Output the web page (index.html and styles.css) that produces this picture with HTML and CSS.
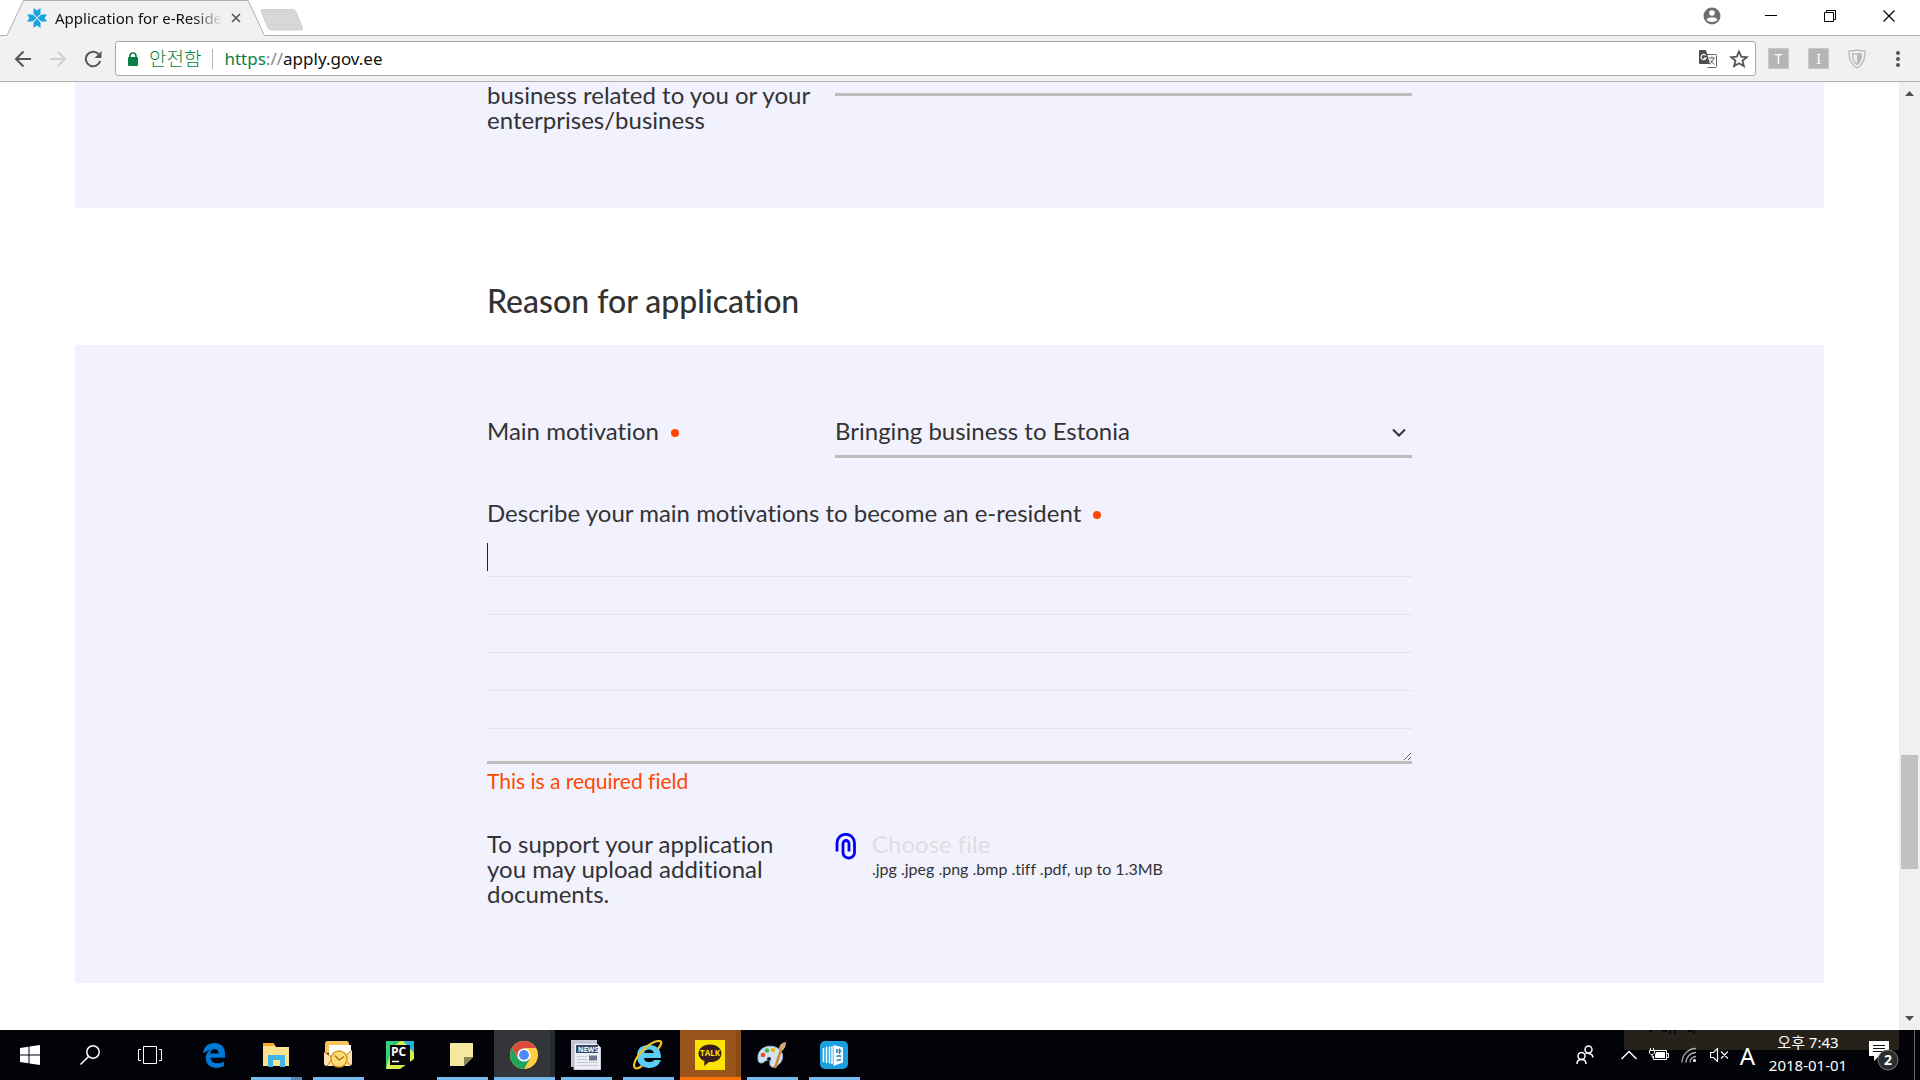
FILE: index.html
```html
<!DOCTYPE html>
<html lang="en">
<head>
<meta charset="utf-8">
<title>Application for e-Residency</title>
<link rel="stylesheet" href="styles.css">
</head>
<body>
<header class="browser">
  <div class="tabstrip">
    <div class="tab">
      <svg class="tab-shape" width="265" height="36" viewBox="0 0 265 36" aria-hidden="true"><path d="M0 36V35.500H7L23.500.500H248L264.500 35.500V36Z" fill="#f1f1f1"/><path d="M0 35.500H7L23.500.500H248L264.500 35.500" fill="none" stroke="#b0b0b0"/></svg>
      <svg class="favicon" width="20" height="20" viewBox="0 0 20 20" aria-hidden="true"><g fill="#16a3e0"><path id="petal" d="M6.500 0L10 2.500 13.500 0V5.500L10 9.600 6.500 5.500Z"/><use href="#petal" transform="rotate(90 10 10)"/><use href="#petal" transform="rotate(180 10 10)"/><use href="#petal" transform="rotate(270 10 10)"/></g></svg>
      <span class="tab-title">Application for e-Reside</span>
      <button class="icon-btn tab-close" aria-label="Close tab"><svg width="10" height="10" viewBox="0 0 10 10"><path d="M1 1L9 9M9 1L1 9" stroke="#555" stroke-width="1.600"/></svg></button>
    </div>
    <button class="icon-btn new-tab" aria-label="New tab"><svg width="44" height="22" viewBox="0 0 44 22"><path d="M2 .500H33Q35 .500 36 3L42.500 19Q43 21 41 21H11Q9 21 8 19L1 2Q.500.500 2 .500Z" fill="#d7d7d7" stroke="#d0d0d0"/></svg></button>
    <div class="window-controls">
      <button class="icon-btn" aria-label="Profile"><svg width="18" height="18" viewBox="0 0 18 18"><circle cx="9" cy="9" r="8.500" fill="#6e6e6e"/><circle cx="9" cy="6" r="2.800" fill="#fff"/><path d="M3.500 13Q4.500 10.200 9 10.200T14.500 13Q12.500 15 9 15T3.500 13Z" fill="#fff"/></svg></button>
      <button class="icon-btn" aria-label="Minimize"><svg width="12" height="12" viewBox="0 0 12 12"><path d="M0 5.500H12" stroke="#000"/></svg></button>
      <button class="icon-btn" aria-label="Restore"><svg width="12" height="12" viewBox="0 0 12 12" fill="none" stroke="#000"><path d="M.500 2.500H9.500V11.500H.500ZM2.500 2.500V.500H11.500V9.500H9.500"/></svg></button>
      <button class="icon-btn" aria-label="Close"><svg width="12" height="12" viewBox="0 0 12 12"><path d="M.500.500L11.500 11.500M11.500.500L.500 11.500" stroke="#000" stroke-width="1.200"/></svg></button>
    </div>
  </div>
  <div class="toolbar">
    <button class="icon-btn" aria-label="Back"><svg width="18" height="18" viewBox="0 0 18 18" fill="none" stroke="#555" stroke-width="2"><path d="M17 9H2.500M9.500 1.500L2 9 9.500 16.500"/></svg></button>
    <button class="icon-btn" aria-label="Forward"><svg width="18" height="18" viewBox="0 0 18 18" fill="none" stroke="#d0d0d0" stroke-width="2"><path d="M1 9H15.500M8.500 1.500L16 9 8.500 16.500"/></svg></button>
    <button class="icon-btn" aria-label="Reload"><svg width="18" height="18" viewBox="0 0 18 18"><path d="M14.500 4A7.300 7.300 0 1 0 16.200 11" fill="none" stroke="#555" stroke-width="2"/><path d="M17.500 1V8H10.500Z" fill="#555"/></svg></button>
    <div class="omnibox">
      <svg class="lock" width="10" height="14" viewBox="0 0 10 14" aria-hidden="true"><rect y="5" width="10" height="9" rx="1" fill="#0b8043"/><path d="M2 6V4A3 3 0 0 1 8 4V6" fill="none" stroke="#0b8043" stroke-width="1.600"/></svg>
      <span class="secure">안전함</span>
      <div class="url" role="textbox" aria-label="Address" contenteditable="true" spellcheck="false"><span class="scheme">https</span><span class="sep">://</span>apply.gov.ee</div>
      <button class="icon-btn" aria-label="Translate"><svg width="18" height="18" viewBox="0 0 18 18"><path d="M8 4.500H16.500Q17.500 4.500 17.500 5.500V16.500Q17.500 17.500 16.500 17.500H8.500" fill="#fff" stroke="#666"/><path d="M1 0H7L11 14H1Q0 14 0 13V1Q0 0 1 0Z" fill="#4e4e4e"/><path d="M6.800 5.500A2.600 2.600 0 1 0 7 8.200H4.800" fill="none" stroke="#fff" stroke-width="1.200"/><path d="M10 8H16M13 6.500V8M15 8Q14 12 10.500 14M11.500 10Q13 13 15.500 14.500" fill="none" stroke="#666"/></svg></button>
      <button class="icon-btn" aria-label="Bookmark"><svg width="20" height="20" viewBox="0 0 20 20"><path d="M10 2.500L12.200 7.600 17.800 8.100 13.500 11.700 14.900 17.200 10 14.200 5.100 17.200 6.500 11.700 2.200 8.100 7.800 7.600Z" fill="none" stroke="#555" stroke-width="1.800"/></svg></button>
    </div>
    <div class="extensions">
      <button class="ext-tile">T</button>
      <button class="ext-tile">I</button>
      <button class="icon-btn" aria-label="Shield"><svg width="18" height="20" viewBox="0 0 18 20"><path d="M1 2Q6 2 9 1 12 2 17 2 17.500 14 9 19 .500 14 1 2Z" fill="#f1f1f1" stroke="#bdbdbd" stroke-width="1.400"/><path d="M4.500 5H13.500Q13.500 12 9 15.500 4.500 12 4.500 5Z" fill="none" stroke="#b8b8b8" stroke-width="1.300"/><path d="M9 5H13.500Q13.500 12 9 15.500Z" fill="#b8b8b8"/></svg></button>
      <button class="icon-btn" aria-label="Menu"><svg width="4" height="16" viewBox="0 0 4 16" fill="#555"><circle cx="2" cy="2" r="2"/><circle cx="2" cy="8" r="2"/><circle cx="2" cy="14" r="2"/></svg></button>
    </div>
  </div>
</header>

<div class="viewport">
  <main class="page">
    <section class="panel panel-prev">
      <div class="column row">
        <label for="related">business related to you or your enterprises/business</label>
        <input class="line-input" id="related" type="text">
      </div>
    </section>
    <h2 class="column heading">Reason for application</h2>
    <section class="panel panel-reason">
      <div class="column">
        <div class="row">
          <label class="row-label required" for="motivation">Main motivation</label>
          <div class="select-wrap">
            <select id="motivation"><option>Bringing business to Estonia</option></select>
            <svg class="select-arrow" width="14" height="10" viewBox="0 0 14 10" aria-hidden="true"><path d="M1 1.500L7 7.500 13 1.500" fill="none" stroke="#333" stroke-width="2"/></svg>
          </div>
        </div>
        <label class="describe required" for="describe">Describe your main motivations to become an e-resident</label>
        <textarea id="describe"></textarea>
        <p class="error">This is a required field</p>
        <div class="row">
          <p class="upload-text">To support your application you may upload additional documents.</p>
          <div class="upload">
            <svg class="clip" width="22" height="28" viewBox="0 0 22 28" aria-hidden="true"><path d="M2 18.500V10A8.600 8.600 0 0 1 19.500 10V20A5.800 5.800 0 0 1 8 20V10.500A3 3 0 0 1 14 10.500V18.500" fill="none" stroke="#00f" stroke-width="2.800"/></svg>
            <div>
              <button class="choose">Choose file</button>
              <p class="hint">.jpg .jpeg .png .bmp .tiff .pdf, up to 1.3MB</p>
            </div>
          </div>
        </div>
      </div>
    </section>
  </main>
  <div class="scrollbar" aria-hidden="true">
    <svg width="9" height="5" viewBox="0 0 9 5"><path d="M0 5L4.500 0 9 5Z" fill="#505050"/></svg>
    <div class="track"><div class="thumb"></div></div>
    <svg width="9" height="5" viewBox="0 0 9 5"><path d="M0 0L4.500 5 9 0Z" fill="#505050"/></svg>
  </div>
</div>

<footer class="taskbar">
  <div class="ghost" aria-hidden="true"><svg width="60" height="5" viewBox="0 0 60 5"><path d="M1 1H4M14 1H19M22 0V4M27 0V4M46 0V4M40 1H44" stroke="#0d0b08" stroke-width="2"/></svg></div>
  <nav class="system">
    <button aria-label="Start"><svg width="20" height="20" viewBox="0 0 20 20" fill="#fff"><path d="M0 3L8.500 1.700V9.500H0ZM9.500 1.500L20 0V9.500H9.500ZM0 10.500H8.500V18.300L0 17ZM9.500 10.500H20V20L9.500 18.500Z"/></svg></button>
    <button aria-label="Search"><svg width="20" height="20" viewBox="0 0 20 20" fill="none" stroke="#fff" stroke-width="1.500"><circle cx="13" cy="7" r="6.200"/><path d="M8.500 11.500L.500 19.500"/></svg></button>
    <button aria-label="Task view"><svg width="24" height="18" viewBox="0 0 24 18" fill="none" stroke="#fff"><path d="M5.500.500H18.500V17.500H5.500ZM3 3.500H.500V14.500H3M21 3.500H23.500V14.500H21"/></svg></button>
  </nav>
  <nav class="apps">
    <button aria-label="Edge"><svg width="24" height="26" viewBox="0 0 26 28"><path d="M1 12Q3 1 13 1 25 1 25 14V17H9Q10 23 17 23 21 23 24 21V26Q20 28 15 28 4 27 4 17 4 11 10 8 6 9 1 12ZM9 12.500H18Q18 7.500 13.500 7.500 9.500 8 9 12.500Z" fill="#0078d7"/></svg></button>
    <button class="open stacked" aria-label="File Explorer"><svg width="28" height="24" viewBox="0 0 28 24"><path d="M1 1H12L14 4H27V23H1Z" fill="#ffe28e"/><path d="M1 0H12V3H1Z" fill="#f5ac1c"/><path d="M6 24V12H23V24H18V17H11V24Z" fill="#3fb6e8"/></svg></button>
    <button class="open" aria-label="Outlook"><svg width="30" height="28" viewBox="0 0 30 28"><path d="M2 3Q2 0 5 0H23Q26 0 26 3V12H2Z" fill="#f9c45c"/><path d="M6 4H28V20H6Z" fill="#fff"/><path d="M1 11L15 19 29 9V22Q29 25 26 25H4Q1 25 1 22Z" fill="#fbe0b0"/><path d="M1 11L10 17 4 25M29 9L20 17 27 24" fill="none" stroke="#e4692b"/><circle cx="16" cy="18" r="8" fill="#ffdf7a" stroke="#d99b1a" stroke-width="1.500"/><path d="M12 14.500L16 19 21 15.500" fill="none" stroke="#a97818" stroke-width="1.500"/></svg></button>
    <button aria-label="PyCharm"><svg width="28" height="28" viewBox="0 0 28 28"><path d="M0 0H20L0 20Z" fill="#22c97a"/><path d="M14 0H28V18L14 28H0V12Z" fill="#d9ef4a"/><path d="M17 0H28V12Z" fill="#21b6e0"/><path d="M0 0H8L0 28Z" fill="#35d27a"/><rect x="4" y="4" width="20" height="20" fill="#080808"/><text class="pc-text" x="5" y="15">PC</text><path d="M6 20.500H13" stroke="#fff" stroke-width="1.500"/></svg></button>
    <button class="open" aria-label="Sticky Notes"><svg width="24" height="24" viewBox="0 0 24 24"><path d="M0 0H23V14L14 23H0Z" fill="#f4e8a0"/><path d="M14 23V14H23Z" fill="#8a8358"/></svg></button>
    <button class="open active" aria-label="Chrome"><svg width="28" height="28" viewBox="0 0 28 28"><circle cx="14" cy="14" r="14" fill="#ffcd40"/><path d="M14 14V7H26.100A14 14 0 0 0 1.900 7L8 17.500Z" fill="#dd4c40"/><path d="M1.900 7A14 14 0 0 0 14 28L20 17.500 8 17.500Z" fill="#1da462"/><circle cx="14" cy="14" r="6.600" fill="#fff"/><circle cx="14" cy="14" r="5" fill="#4c8bf5"/></svg></button>
    <button class="open" aria-label="News"><svg width="30" height="30" viewBox="0 0 30 30"><path d="M0 0H26V27H0Z" fill="#c5c7d4"/><path d="M3 3H25L30 8V30H3Z" fill="#eeeef6" stroke="#b4b6c8"/><path d="M5 5H27V13H5Z" fill="#384a66"/><text class="news-text" x="7" y="12">NEWS</text><path d="M18 15.500H26V20.500H18Z" fill="#6d738c"/><path d="M6 16.500H16M6 19.500H16M6 22.500H27M6 25.500H27" stroke="#c5c7d2"/></svg></button>
    <button class="open" aria-label="Internet Explorer"><svg width="30" height="30" viewBox="0 0 30 30"><path d="M28 18H11Q11 22 16 22 20 22 21 20H28Q25 28 16 28 4 27 4 16 4 5 16 5 28 5 28 18ZM11 13H21Q20 9.500 16 9.500 12 9.500 11 13Z" fill="#5bcdf5"/><path d="M25 9Q31 1 26 1 20 1 11 9 1 19 1 26 2 31 9 26" fill="none" stroke="#f4c022" stroke-width="2.200"/></svg></button>
    <button class="open alert" aria-label="KakaoTalk"><svg width="30" height="30" viewBox="0 0 30 30"><rect width="30" height="30" fill="#fbe300"/><path d="M15 4.500C8 4.500 3.500 8.500 3.500 13.500 3.500 17 6 19.500 9.500 21L9 26 14 22C21 22.500 26.500 19 26.500 13.500 26.500 8.500 22 4.500 15 4.500Z" fill="#3a1d1d"/><text class="talk-text" x="15" y="16" text-anchor="middle">TALK</text></svg></button>
    <button class="open" aria-label="Paint"><svg width="30" height="28" viewBox="0 0 30 28"><path d="M1 18C0 8 10 3 18 6 27 9 28 19 21 24 17 28 12 26 13 22 13 18 9 19 7 21 4 23 1 22 1 18Z" fill="#cfe3f3" stroke="#90b5d3"/><circle cx="6" cy="14" r="2.300" fill="#e3502b"/><circle cx="10" cy="9.500" r="2.300" fill="#4cb54a"/><circle cx="16" cy="9" r="2.300" fill="#f3b51c"/><circle cx="12" cy="18" r="2" fill="#10203a"/><path d="M18 27L24 9" stroke="#d9822b" stroke-width="2.400"/><path d="M22 8Q22 2 29 1 29 7 25 10Z" fill="#d5a876"/></svg></button>
    <button class="open" aria-label="Ridibooks"><svg width="28" height="28" viewBox="0 0 28 28"><rect width="28" height="28" rx="5" fill="#1c9fe0"/><path d="M3.500 7V21M6.500 6V22M9.500 5.500V22.500M12 5V23" stroke="#fff" stroke-width="1.500"/><path d="M13.500 4L23 6.500V21.500L13.500 25Z" fill="#fff"/><path d="M17 8V12M19.500 7.500V13M19.500 10H21.500M16.500 15.500Q19 14 21 15.500M16.500 19.500L21 18.500" fill="none" stroke="#1c7fc0" stroke-width="1.600"/></svg></button>
  </nav>
  <div class="tray">
    <button class="people" aria-label="People"><svg width="18" height="20" viewBox="0 0 18 20" fill="none" stroke="#fff" stroke-width="1.500"><circle cx="12.500" cy="4.500" r="3.500"/><circle cx="5.500" cy="11" r="3.500"/><path d="M1 19Q1 14.500 5.500 14.500T10 19M12 8.500Q16.500 8.500 17 12.500M9.500 9L11 8"/></svg></button>
    <button aria-label="Show hidden icons"><svg width="16" height="10" viewBox="0 0 16 10"><path d="M.500 9L8 1.500 15.500 9" fill="none" stroke="#fff" stroke-width="1.500"/></svg></button>
    <button aria-label="Battery"><svg width="20" height="14" viewBox="0 0 20 14"><path d="M6 2.500H17.500V11.500H4.500V8M17.500 5.500H19.500V9.500H17.500" fill="none" stroke="#fff"/><path d="M7 4H16V10H6V7Z" fill="#fff"/><path d="M1.500 0V2M4.500 0V2M.500 2.500H5.500V5L4 6.500H2L.500 5ZM3 6.500V8Q3 10 5 10" fill="none" stroke="#fff"/></svg></button>
    <button aria-label="Network"><svg width="16" height="16" viewBox="0 0 16 16" fill="none" stroke="#aaa" stroke-width="1.300"><path d="M1 15.500A14 14 0 0 1 15 1.500M5 15.500A10 10 0 0 1 15 5.500M9 15.500A6 6 0 0 1 15 9.500"/><circle cx="13.500" cy="13.500" r="1.500" fill="#fff" stroke="none"/></svg></button>
    <button aria-label="Volume muted"><svg width="18" height="14" viewBox="0 0 18 14" fill="none" stroke="#fff" stroke-width="1.200"><path d="M.500 4.500H3.500L7.500.500V13.500L3.500 9.500H.500ZM11 3.500L18 10.500M18 3.500L11 10.500"/></svg></button>
    <button class="ime">A</button>
    <button class="clock"><span>오후 7:43</span><span>2018-01-01</span></button>
    <button class="notify" aria-label="Notifications"><svg width="32" height="32" viewBox="0 0 32 32"><path d="M2 2H22V17H12L7 22V17H2Z" fill="#fff"/><path d="M6 6.500H18M6 9.500H18M6 12.500H18" stroke="#111"/><circle cx="21" cy="21" r="10" fill="#2d2d2d" stroke="#777"/><text class="badge-text" x="21" y="26" text-anchor="middle">2</text></svg></button>
    <button class="show-desktop" aria-label="Show desktop"></button>
  </div>
</footer>
</body>
</html>
```
FILE: styles.css
```css
* { box-sizing: border-box; }

body {
  margin: 0;
  height: 100vh;
  display: flex;
  flex-direction: column;
  overflow: hidden;
  background: #fff;
  color: #333;
  font-family: Lato, "Noto Sans CJK KR", sans-serif;
  font-variant-ligatures: none;
}

h2, p { margin: 0; }

button {
  padding: 0;
  border: 0;
  background: none;
  color: inherit;
  font: inherit;
}

svg { display: block; flex: none; }

.icon-btn { display: flex; align-items: center; justify-content: center; }

/* Browser frame */
.browser { flex: none; font-family: "Noto Sans", "Noto Sans CJK KR", sans-serif; }

.tabstrip {
  display: flex;
  height: 36px;
  background: linear-gradient(#b0b0b0, #b0b0b0) bottom / 100% 1px no-repeat #fff;
}

.tab {
  position: relative;
  display: flex;
  align-items: center;
  width: 260px;
  padding-left: 27px;
}

.tab-shape { position: absolute; left: 0; top: 0; }
.favicon, .tab-title, .tab-close { position: relative; }

.tab-title {
  width: 168px;
  margin: 0 8px;
  overflow: hidden;
  white-space: nowrap;
  font-size: 15px;
  line-height: 22px;
  color: #111;
  -webkit-mask-image: linear-gradient(90deg, #000 82%, transparent);
  mask-image: linear-gradient(90deg, #000 82%, transparent);
}

.new-tab { padding: 9px 0 5px; align-items: flex-start; }

.window-controls { display: flex; margin: 0 2px 0 auto; height: 32px; }
.window-controls button { width: 59px; }

.toolbar {
  display: flex;
  align-items: center;
  height: 46px;
  padding-left: 5px;
  background: #f1f1f1;
  border-bottom: 1px solid #b0b0b0;
}

.toolbar > .icon-btn { width: 35px; height: 35px; }

.omnibox {
  flex: 1;
  display: flex;
  align-items: center;
  height: 35px;
  margin-left: 5px;
  padding: 0 6px 0 12px;
  background: #fff;
  border: 1px solid #a9a9a9;
  border-radius: 3px;
  font-size: 17px;
  line-height: 24px;
}

.omnibox .icon-btn { margin-left: 12px; }

.secure {
  margin: 0 11px;
  padding-right: 11px;
  border-right: 1px solid #b5b5b5;
  line-height: 20px;
  font-size: 19px;
  font-weight: 300;
  color: #0b8043;
}

.url { flex: 1; outline: 0; color: #111; }
.scheme { color: #0b8043; }
.sep { color: #888; }

.extensions { display: flex; align-items: center; gap: 19px; padding: 0 20px 0 12px; }
.extensions .icon-btn:last-child { margin-left: 11px; }

.ext-tile {
  width: 21px;
  height: 21px;
  background: #b5b5b5;
  border: 1px solid #c8c8c8;
  color: #fff;
  font-size: 14px;
  line-height: 19px;
}

/* Page */
.viewport { flex: 1; min-height: 0; display: flex; }
.page {
  flex: 1;
  padding: 0 75px;
  overflow: clip;
  overflow-clip-margin: 4px;
  font-size: 24px;
  line-height: 25px;
}
.column { width: 100%; max-width: 925px; margin: 0 auto; }
.panel { background: #f2f2ff; }
.panel-prev { height: 126px; }
.row { display: grid; grid-template-columns: 348px 1fr; align-items: start; }
.row label, .upload-text { padding-right: 20px; }

.line-input {
  width: 100%;
  height: 14px;
  padding: 0;
  border: 0;
  border-bottom: 3px solid #bcbcbc;
  background: none;
}

.heading {
  padding: 74px 0 25px;
  font-size: 32px;
  line-height: 38px;
  font-weight: 500;
}

.panel-reason { padding: 68px 0 77px; }
.row .row-label { padding-top: 5px; }

.required::after {
  content: "";
  display: inline-block;
  width: 8px;
  height: 8px;
  margin-left: 12px;
  border-radius: 50%;
  background: #ff4800;
  vertical-align: 3px;
}

.select-wrap { position: relative; }

select {
  display: block;
  width: 100%;
  height: 45px;
  padding: 0 0 7px;
  appearance: none;
  border: 0;
  border-bottom: 3px solid #bcbcbc;
  border-radius: 0;
  background: none;
  color: inherit;
  font: inherit;
  line-height: 31px;
}

.select-arrow { position: absolute; right: 6px; top: 15px; }

.describe { display: block; margin: 42px 0 14px; }

/* Ruled writing area with a text cursor on the first line */
textarea {
  display: block;
  width: 100%;
  height: 225px;
  padding: 0;
  border: 0;
  border-bottom: 3px solid #bcbcbc;
  outline: 0;
  background:
    linear-gradient(#222, #222) 0 4px / 1px 28px no-repeat,
    repeating-linear-gradient(transparent 0 37px, #e4e4e4 37px 38px);
  color: inherit;
  font: inherit;
  line-height: 38px;
}

.error { margin: 5px 0 38px; font-size: 21px; line-height: 24px; color: #ff4800; }
.upload { display: flex; gap: 15px; }
.clip { margin-top: 2px; }
.choose { display: block; color: #dedede; }
.hint { font-size: 16px; line-height: 25px; }

.scrollbar {
  flex: none;
  display: flex;
  flex-direction: column;
  align-items: center;
  width: 21px;
  padding: 9px 0;
  background: #f0f0f0;
}

.track { flex: 1; display: flex; flex-direction: column; justify-content: flex-end; padding-bottom: 147px; }
.thumb { width: 17px; height: 114px; background: #c1c1c1; }

/* Taskbar */
.taskbar {
  position: relative;
  flex: none;
  display: flex;
  height: 50px;
  background: #010308;
  color: #fff;
  font-family: "Noto Sans", "Noto Sans CJK KR", sans-serif;
}

.taskbar button {
  position: relative;
  display: flex;
  align-items: center;
  justify-content: center;
}

.ghost { position: absolute; right: 21px; top: 0; width: 275px; height: 20px; padding-left: 24px; background: #26221b; }
.system { display: flex; }
.system button { width: 60px; }
.apps { display: flex; gap: 1px; margin-left: 4px; }
.apps button { width: 61px; padding-right: 2px; }
.apps .open { background: linear-gradient(#76b9ed, #76b9ed) bottom / 51px 3px no-repeat; }
.apps .stacked { background: linear-gradient(90deg, #76b9ed 40px, #5787b0 40px) bottom / 51px 3px no-repeat; }
.apps .active { background: linear-gradient(#76b9ed, #76b9ed) bottom / 100% 3px no-repeat, linear-gradient(90deg, #333539 56px, #25282c 56px); }
.apps .alert { background: linear-gradient(#ff7200, #ff7200) bottom / 100% 3px no-repeat, linear-gradient(90deg, #9a551d 56px, #8a4b19 56px); }

.pc-text { font: 700 12px "Open Sans", sans-serif; fill: #fff; }
.news-text { font: 700 7px "Open Sans", sans-serif; fill: #fff; }
.talk-text { font: 700 8px "Open Sans", sans-serif; fill: #fbe300; }
.badge-text { font: 700 14px "Open Sans", sans-serif; fill: #fff; }

.tray { display: flex; margin-left: auto; }
.tray button { width: 30px; padding-right: 1px; }
.tray .people { margin-right: 14px; }
.tray .ime { padding-right: 3px; font-size: 24px; }
.tray .clock { flex-direction: column; padding: 0 0 2px; width: 88px; font-size: 15px; line-height: 23px; }
.tray .notify { width: 62px; }
.tray .show-desktop { width: 6px; border-left: 1px solid #666; }
```
